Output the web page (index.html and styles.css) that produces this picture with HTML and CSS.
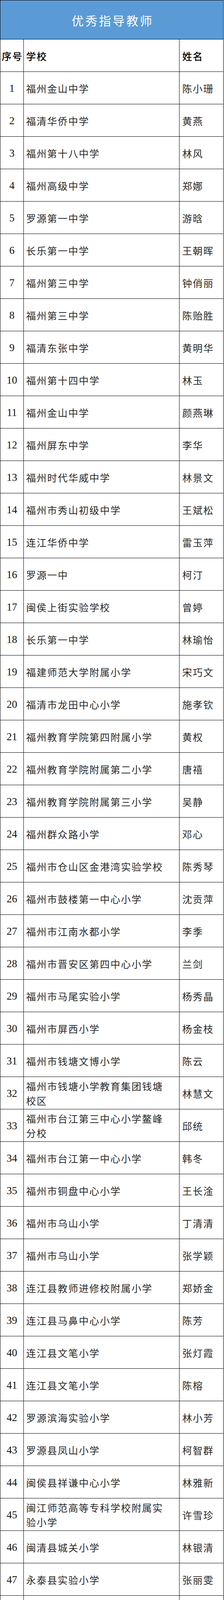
FILE: index.html
```html
<!DOCTYPE html>
<html lang="zh-CN">
<head>
<meta charset="utf-8">
<title>优秀指导教师</title>
<link rel="stylesheet" href="styles.css">
</head>
<body>
<div class="sheet" role="table" aria-label="优秀指导教师">
<div class="title" role="row"><span role="columnheader">优秀指导教师</span></div>
<div class="row head" role="row"><div class="cell c-no" role="columnheader">序号</div><div class="cell c-school" role="columnheader">学校</div><div class="cell c-name" role="columnheader">姓名</div></div>
<div class="row" role="row"><div class="cell c-no" role="cell">1</div><div class="cell c-school" role="cell">福州金山中学</div><div class="cell c-name" role="cell">陈小珊</div></div>
<div class="row" role="row"><div class="cell c-no" role="cell">2</div><div class="cell c-school" role="cell">福清华侨中学</div><div class="cell c-name" role="cell">黄燕</div></div>
<div class="row" role="row"><div class="cell c-no" role="cell">3</div><div class="cell c-school" role="cell">福州第十八中学</div><div class="cell c-name" role="cell">林风</div></div>
<div class="row" role="row"><div class="cell c-no" role="cell">4</div><div class="cell c-school" role="cell">福州高级中学</div><div class="cell c-name" role="cell">郑娜</div></div>
<div class="row" role="row"><div class="cell c-no" role="cell">5</div><div class="cell c-school" role="cell">罗源第一中学</div><div class="cell c-name" role="cell">游晗</div></div>
<div class="row" role="row"><div class="cell c-no" role="cell">6</div><div class="cell c-school" role="cell">长乐第一中学</div><div class="cell c-name" role="cell">王朝晖</div></div>
<div class="row" role="row"><div class="cell c-no" role="cell">7</div><div class="cell c-school" role="cell">福州第三中学</div><div class="cell c-name" role="cell">钟俏丽</div></div>
<div class="row" role="row"><div class="cell c-no" role="cell">8</div><div class="cell c-school" role="cell">福州第三中学</div><div class="cell c-name" role="cell">陈贻胜</div></div>
<div class="row" role="row"><div class="cell c-no" role="cell">9</div><div class="cell c-school" role="cell">福清东张中学</div><div class="cell c-name" role="cell">黄明华</div></div>
<div class="row" role="row"><div class="cell c-no" role="cell">10</div><div class="cell c-school" role="cell">福州第十四中学</div><div class="cell c-name" role="cell">林玉</div></div>
<div class="row" role="row"><div class="cell c-no" role="cell">11</div><div class="cell c-school" role="cell">福州金山中学</div><div class="cell c-name" role="cell">颜燕琳</div></div>
<div class="row" role="row"><div class="cell c-no" role="cell">12</div><div class="cell c-school" role="cell">福州屏东中学</div><div class="cell c-name" role="cell">李华</div></div>
<div class="row" role="row"><div class="cell c-no" role="cell">13</div><div class="cell c-school" role="cell">福州时代华威中学</div><div class="cell c-name" role="cell">林景文</div></div>
<div class="row" role="row"><div class="cell c-no" role="cell">14</div><div class="cell c-school" role="cell">福州市秀山初级中学</div><div class="cell c-name" role="cell">王斌松</div></div>
<div class="row" role="row"><div class="cell c-no" role="cell">15</div><div class="cell c-school" role="cell">连江华侨中学</div><div class="cell c-name" role="cell">雷玉萍</div></div>
<div class="row" role="row"><div class="cell c-no" role="cell">16</div><div class="cell c-school" role="cell">罗源一中</div><div class="cell c-name" role="cell">柯汀</div></div>
<div class="row" role="row"><div class="cell c-no" role="cell">17</div><div class="cell c-school" role="cell">闽侯上街实验学校</div><div class="cell c-name" role="cell">曾婷</div></div>
<div class="row" role="row"><div class="cell c-no" role="cell">18</div><div class="cell c-school" role="cell">长乐第一中学</div><div class="cell c-name" role="cell">林瑜怡</div></div>
<div class="row" role="row"><div class="cell c-no" role="cell">19</div><div class="cell c-school" role="cell">福建师范大学附属小学</div><div class="cell c-name" role="cell">宋巧文</div></div>
<div class="row" role="row"><div class="cell c-no" role="cell">20</div><div class="cell c-school" role="cell">福清市龙田中心小学</div><div class="cell c-name" role="cell">施孝钦</div></div>
<div class="row" role="row"><div class="cell c-no" role="cell">21</div><div class="cell c-school" role="cell">福州教育学院第四附属小学</div><div class="cell c-name" role="cell">黄权</div></div>
<div class="row" role="row"><div class="cell c-no" role="cell">22</div><div class="cell c-school" role="cell">福州教育学院附属第二小学</div><div class="cell c-name" role="cell">唐禧</div></div>
<div class="row" role="row"><div class="cell c-no" role="cell">23</div><div class="cell c-school" role="cell">福州教育学院附属第三小学</div><div class="cell c-name" role="cell">吴静</div></div>
<div class="row" role="row"><div class="cell c-no" role="cell">24</div><div class="cell c-school" role="cell">福州群众路小学</div><div class="cell c-name" role="cell">邓心</div></div>
<div class="row" role="row"><div class="cell c-no" role="cell">25</div><div class="cell c-school" role="cell">福州市仓山区金港湾实验学校</div><div class="cell c-name" role="cell">陈秀琴</div></div>
<div class="row" role="row"><div class="cell c-no" role="cell">26</div><div class="cell c-school" role="cell">福州市鼓楼第一中心小学</div><div class="cell c-name" role="cell">沈贡萍</div></div>
<div class="row" role="row"><div class="cell c-no" role="cell">27</div><div class="cell c-school" role="cell">福州市江南水都小学</div><div class="cell c-name" role="cell">李季</div></div>
<div class="row" role="row"><div class="cell c-no" role="cell">28</div><div class="cell c-school" role="cell">福州市晋安区第四中心小学</div><div class="cell c-name" role="cell">兰剑</div></div>
<div class="row" role="row"><div class="cell c-no" role="cell">29</div><div class="cell c-school" role="cell">福州市马尾实验小学</div><div class="cell c-name" role="cell">杨秀晶</div></div>
<div class="row" role="row"><div class="cell c-no" role="cell">30</div><div class="cell c-school" role="cell">福州市屏西小学</div><div class="cell c-name" role="cell">杨金枝</div></div>
<div class="row" role="row"><div class="cell c-no" role="cell">31</div><div class="cell c-school" role="cell">福州市钱塘文博小学</div><div class="cell c-name" role="cell">陈云</div></div>
<div class="row" role="row"><div class="cell c-no" role="cell">32</div><div class="cell c-school" role="cell">福州市钱塘小学教育集团钱塘校区</div><div class="cell c-name" role="cell">林慧文</div></div>
<div class="row" role="row"><div class="cell c-no" role="cell">33</div><div class="cell c-school" role="cell">福州市台江第三中心小学鳌峰分校</div><div class="cell c-name" role="cell">邱统</div></div>
<div class="row" role="row"><div class="cell c-no" role="cell">34</div><div class="cell c-school" role="cell">福州市台江第一中心小学</div><div class="cell c-name" role="cell">韩冬</div></div>
<div class="row" role="row"><div class="cell c-no" role="cell">35</div><div class="cell c-school" role="cell">福州市铜盘中心小学</div><div class="cell c-name" role="cell">王长淦</div></div>
<div class="row" role="row"><div class="cell c-no" role="cell">36</div><div class="cell c-school" role="cell">福州市乌山小学</div><div class="cell c-name" role="cell">丁清清</div></div>
<div class="row" role="row"><div class="cell c-no" role="cell">37</div><div class="cell c-school" role="cell">福州市乌山小学</div><div class="cell c-name" role="cell">张学颖</div></div>
<div class="row" role="row"><div class="cell c-no" role="cell">38</div><div class="cell c-school" role="cell">连江县教师进修校附属小学</div><div class="cell c-name" role="cell">郑娇金</div></div>
<div class="row" role="row"><div class="cell c-no" role="cell">39</div><div class="cell c-school" role="cell">连江县马鼻中心小学</div><div class="cell c-name" role="cell">陈芳</div></div>
<div class="row" role="row"><div class="cell c-no" role="cell">40</div><div class="cell c-school" role="cell">连江县文笔小学</div><div class="cell c-name" role="cell">张灯霞</div></div>
<div class="row" role="row"><div class="cell c-no" role="cell">41</div><div class="cell c-school" role="cell">连江县文笔小学</div><div class="cell c-name" role="cell">陈榕</div></div>
<div class="row" role="row"><div class="cell c-no" role="cell">42</div><div class="cell c-school" role="cell">罗源滨海实验小学</div><div class="cell c-name" role="cell">林小芳</div></div>
<div class="row" role="row"><div class="cell c-no" role="cell">43</div><div class="cell c-school" role="cell">罗源县凤山小学</div><div class="cell c-name" role="cell">柯智群</div></div>
<div class="row" role="row"><div class="cell c-no" role="cell">44</div><div class="cell c-school" role="cell">闽侯县祥谦中心小学</div><div class="cell c-name" role="cell">林雅新</div></div>
<div class="row" role="row"><div class="cell c-no" role="cell">45</div><div class="cell c-school" role="cell">闽江师范高等专科学校附属实验小学</div><div class="cell c-name" role="cell">许雪珍</div></div>
<div class="row" role="row"><div class="cell c-no" role="cell">46</div><div class="cell c-school" role="cell">闽清县城关小学</div><div class="cell c-name" role="cell">林银清</div></div>
<div class="row" role="row"><div class="cell c-no" role="cell">47</div><div class="cell c-school" role="cell">永泰县实验小学</div><div class="cell c-name" role="cell">张丽雯</div></div>
<div class="row" role="row"><div class="cell c-no" role="cell">48</div><div class="cell c-school" role="cell">长乐区海峡路小学</div><div class="cell c-name" role="cell">林娜</div></div>
<div class="row" role="row"><div class="cell c-no" role="cell">49</div><div class="cell c-school" role="cell">福州市台江第五中心小学</div><div class="cell c-name" role="cell">林艳</div></div>
<div class="row" role="row"><div class="cell c-no" role="cell">50</div><div class="cell c-school" role="cell">福州市台江第三中心小学</div><div class="cell c-name" role="cell">郭丽丽</div></div>
<div class="row" role="row"><div class="cell c-no" role="cell">51</div><div class="cell c-school" role="cell">闽侯县实验小学</div><div class="cell c-name" role="cell">李维源</div></div>
</div>
</body>
</html>
```

FILE: styles.css
```css
html, body {
  margin: 0;
  padding: 0;
  background: #ffffff;
}

.sheet {
  width: 573px;
  box-sizing: border-box;
  border-left: 1px solid #000000;
  border-top: 1px solid #000000;
  font-family: "Noto Sans CJK SC", "Noto Sans CJK TC", sans-serif;
  color: #2a2a2a;
}

.title {
  box-sizing: border-box;
  height: 100px;
  border-right: 1px solid #000000;
  border-bottom: 1px solid #000000;
  background: #5b9bd5;
  color: #ffffff;
  display: flex;
  align-items: center;
  justify-content: center;
  padding: 2px 0 0 4px;
  font-size: 31px;
  line-height: 40px;
  letter-spacing: 4px;
}

.row {
  display: grid;
  grid-template-columns: 60px 399px 113px;
  height: 83px;
}

.cell {
  box-sizing: border-box;
  height: 83px;
  border-right: 1px solid #000000;
  border-bottom: 1px solid #000000;
  display: flex;
  align-items: center;
  font-size: 25px;
  line-height: 37px;
  letter-spacing: 2px;
  min-width: 0;
}

.c-no {
  justify-content: center;
  padding-top: 2px;
  font-family: "Liberation Serif", "Noto Sans CJK SC", serif;
  font-size: 27px;
  letter-spacing: 0;
  color: #111111;
}

.c-school {
  padding: 2px 20px 0 6px;
}

.c-name {
  padding: 2px 4px 0 7px;
}

.head .cell {
  color: #000000;
  font-weight: 500;
}

.head .c-no {
  font-family: "Noto Sans CJK SC", sans-serif;
  font-size: 25px;
  letter-spacing: 2px;
  padding-left: 2px;
}
```
